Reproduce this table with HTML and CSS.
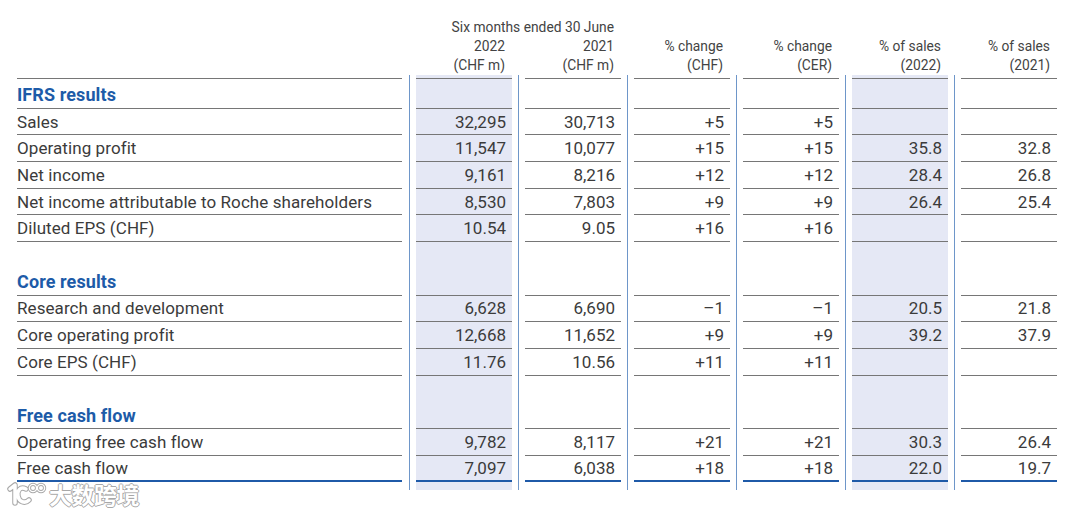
FILE: index.html
```html
<!DOCTYPE html>
<html lang="en">
<head>
<meta charset="utf-8">
<title>Key figures</title>
<link rel="stylesheet" href="styles.css">
</head>
<body>
<div class="page">
  <div class="hd">
    <div class="hc"></div>
    <div class="hc span2">Six months ended 30 June</div>
    <div class="hc"></div><div class="hc"></div><div class="hc"></div><div class="hc"></div>
    <div class="hc"></div>
    <div class="hc">2022<br>(CHF m)</div>
    <div class="hc">2021<br>(CHF m)</div>
    <div class="hc">% change<br>(CHF)</div>
    <div class="hc">% change<br>(CER)</div>
    <div class="hc">% of sales<br>(2022)</div>
    <div class="hc">% of sales<br>(2021)</div>
  </div>

  <div class="tbl">
    <div class="row line"><div class="l"></div><div class="n s"><span></span></div><div class="n"><span></span></div><div class="n"><span></span></div><div class="n"><span></span></div><div class="n s"><span></span></div><div class="n"><span></span></div></div>

    <div class="row line sec first"><div class="l">IFRS results</div><div class="n s"><span></span></div><div class="n"><span></span></div><div class="n"><span></span></div><div class="n"><span></span></div><div class="n s"><span></span></div><div class="n"><span></span></div></div>
    <div class="row line"><div class="l">Sales</div><div class="n s"><span>32,295</span></div><div class="n"><span>30,713</span></div><div class="n"><span>+5</span></div><div class="n"><span>+5</span></div><div class="n s"><span></span></div><div class="n"><span></span></div></div>
    <div class="row line"><div class="l">Operating profit</div><div class="n s"><span>11,547</span></div><div class="n"><span>10,077</span></div><div class="n"><span>+15</span></div><div class="n"><span>+15</span></div><div class="n s"><span>35.8</span></div><div class="n"><span>32.8</span></div></div>
    <div class="row line"><div class="l">Net income</div><div class="n s"><span>9,161</span></div><div class="n"><span>8,216</span></div><div class="n"><span>+12</span></div><div class="n"><span>+12</span></div><div class="n s"><span>28.4</span></div><div class="n"><span>26.8</span></div></div>
    <div class="row line"><div class="l">Net income attributable to Roche shareholders</div><div class="n s"><span>8,530</span></div><div class="n"><span>7,803</span></div><div class="n"><span>+9</span></div><div class="n"><span>+9</span></div><div class="n s"><span>26.4</span></div><div class="n"><span>25.4</span></div></div>
    <div class="row line"><div class="l">Diluted EPS (CHF)</div><div class="n s"><span>10.54</span></div><div class="n"><span>9.05</span></div><div class="n"><span>+16</span></div><div class="n"><span>+16</span></div><div class="n s"><span></span></div><div class="n"><span></span></div></div>

    <div class="row"><div class="l"></div><div class="n s"><span></span></div><div class="n"><span></span></div><div class="n"><span></span></div><div class="n"><span></span></div><div class="n s"><span></span></div><div class="n"><span></span></div></div>

    <div class="row line sec"><div class="l">Core results</div><div class="n s"><span></span></div><div class="n"><span></span></div><div class="n"><span></span></div><div class="n"><span></span></div><div class="n s"><span></span></div><div class="n"><span></span></div></div>
    <div class="row line"><div class="l">Research and development</div><div class="n s"><span>6,628</span></div><div class="n"><span>6,690</span></div><div class="n"><span>–1</span></div><div class="n"><span>–1</span></div><div class="n s"><span>20.5</span></div><div class="n"><span>21.8</span></div></div>
    <div class="row line"><div class="l">Core operating profit</div><div class="n s"><span>12,668</span></div><div class="n"><span>11,652</span></div><div class="n"><span>+9</span></div><div class="n"><span>+9</span></div><div class="n s"><span>39.2</span></div><div class="n"><span>37.9</span></div></div>
    <div class="row line"><div class="l">Core EPS (CHF)</div><div class="n s"><span>11.76</span></div><div class="n"><span>10.56</span></div><div class="n"><span>+11</span></div><div class="n"><span>+11</span></div><div class="n s"><span></span></div><div class="n"><span></span></div></div>

    <div class="row"><div class="l"></div><div class="n s"><span></span></div><div class="n"><span></span></div><div class="n"><span></span></div><div class="n"><span></span></div><div class="n s"><span></span></div><div class="n"><span></span></div></div>

    <div class="row line sec"><div class="l">Free cash flow</div><div class="n s"><span></span></div><div class="n"><span></span></div><div class="n"><span></span></div><div class="n"><span></span></div><div class="n s"><span></span></div><div class="n"><span></span></div></div>
    <div class="row line"><div class="l">Operating free cash flow</div><div class="n s"><span>9,782</span></div><div class="n"><span>8,117</span></div><div class="n"><span>+21</span></div><div class="n"><span>+21</span></div><div class="n s"><span>30.3</span></div><div class="n"><span>26.4</span></div></div>
    <div class="row last"><div class="l">Free cash flow</div><div class="n s"><span>7,097</span></div><div class="n"><span>6,038</span></div><div class="n"><span>+18</span></div><div class="n"><span>+18</span></div><div class="n s"><span>22.0</span></div><div class="n"><span>19.7</span></div></div>

    <div class="row"><div class="l"></div><div class="n s"><span></span></div><div class="n"><span></span></div><div class="n"><span></span></div><div class="n"><span></span></div><div class="n s"><span></span></div><div class="n"><span></span></div></div>
  </div>

  <div class="wm">
    <svg class="wm-logo" width="42" height="26" viewBox="0 0 42 26">
      <g fill="none" stroke-linecap="round" stroke-linejoin="round">
        <path d="M4 8 L9 4 L9 22 M20 8 C14 5 11 10 12 15 C13 21 19 23 23 19" stroke="#a8a8a8" stroke-width="5.5"/>
        <path d="M4 8 L9 4 L9 22 M20 8 C14 5 11 10 12 15 C13 21 19 23 23 19" stroke="#ffffff" stroke-width="3.5"/>
        <circle cx="27" cy="7" r="3.6" stroke="#a8a8a8" stroke-width="3.2"/>
        <circle cx="35" cy="7" r="3.6" stroke="#a8a8a8" stroke-width="3.2"/>
        <circle cx="27" cy="7" r="3.6" stroke="#ffffff" stroke-width="1.4"/>
        <circle cx="35" cy="7" r="3.6" stroke="#ffffff" stroke-width="1.4"/>
      </g>
    </svg>
    <span class="wm-text">大数跨境</span>
  </div>
</div>
</body>
</html>
```

FILE: styles.css
```css
html, body {
  margin: 0;
  padding: 0;
  background: #ffffff;
}

.page {
  position: relative;
  width: 1080px;
  height: 515px;
  padding: 18px 0 0 17px;
  box-sizing: border-box;
  font-family: Roboto, "Noto Sans", Arial, sans-serif;
  color: #3b3b3b;
}

/* header */
.hd {
  display: grid;
  grid-template-columns: 392px repeat(6, 109px);
  font-size: 13.8px;
  line-height: 19px;
  color: #434343;
}
.hc {
  text-align: right;
  padding-right: 13px;
  white-space: nowrap;
}
.span2 {
  grid-column: span 2;
}

/* table body */
.tbl {
  display: grid;
  grid-template-columns: 392px repeat(6, 109px);
  grid-template-rows: 4px 29.7px repeat(14, 26.7px) 8px;
  font-size: 17px;
}
.row {
  display: contents;
}
.l {
  margin-right: 7px;
  display: flex;
  align-items: center;
  white-space: nowrap;
  letter-spacing: 0.08px;
}
.n {
  border-left: 1px solid #6e96c9;
  padding: 0 6px;
  display: flex;
}
.n > span {
  flex: 1;
  display: flex;
  align-items: center;
  justify-content: flex-end;
  padding-right: 6px;
}
.s > span {
  background: #e5e8f5;
}
.line .l,
.line .n > span {
  border-bottom: 1px solid #767676;
}
.last .l,
.last .n > span {
  border-bottom: 2px solid #1f5aa8;
}
.sec .l {
  color: #1d5ba8;
  font-weight: 700;
  font-size: 18px;
  letter-spacing: 0.1px;
}
.first .l {
  padding-top: 3px;
}

/* watermark */
.wm {
  position: absolute;
  left: 6px;
  top: 481px;
  display: flex;
  align-items: center;
  gap: 1px;
}
.wm-text {
  font-family: "Noto Sans CJK SC", sans-serif;
  font-size: 23px;
  line-height: 26px;
  font-weight: 700;
  color: #ffffff;
  letter-spacing: -0.5px;
  text-shadow: 1px 0 0 #a8a8a8, -1px 0 0 #a8a8a8, 0 1px 0 #a8a8a8, 0 -1px 0 #a8a8a8;
}
```
